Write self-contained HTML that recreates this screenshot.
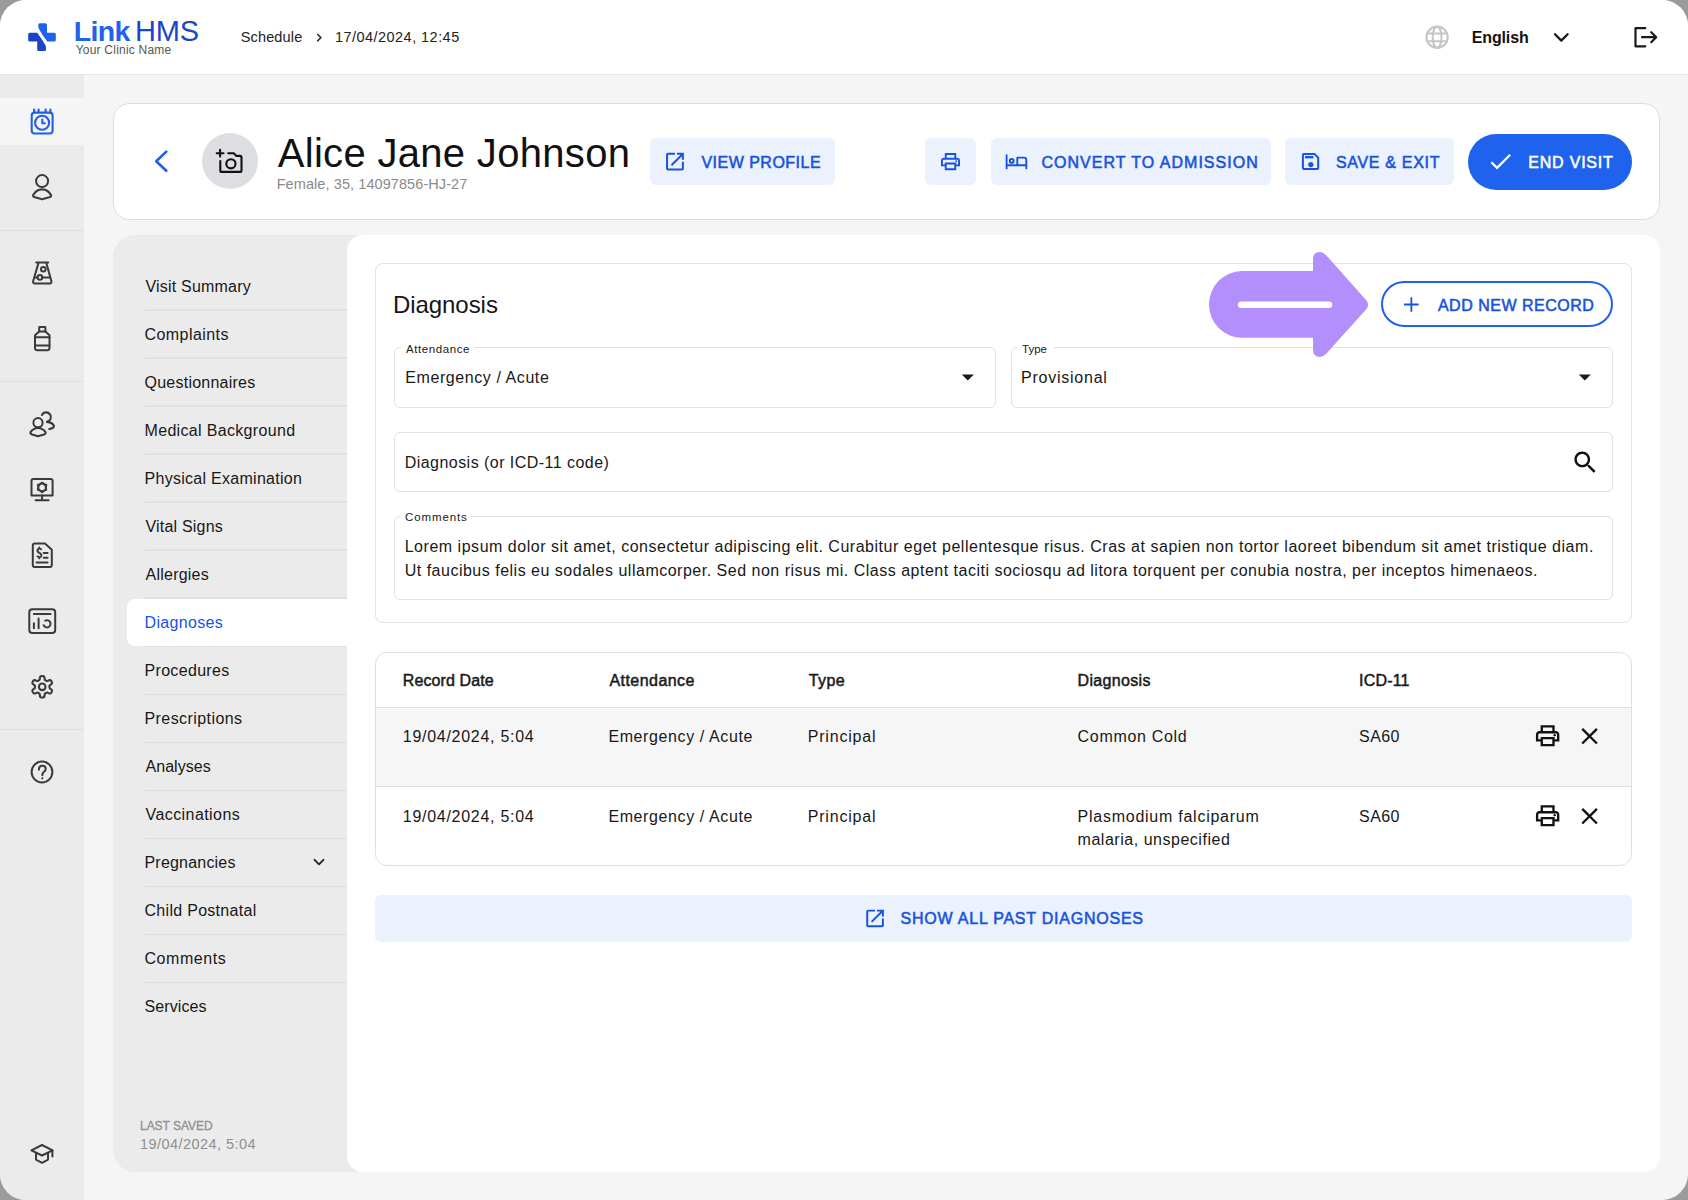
<!DOCTYPE html>
<html><head><meta charset="utf-8"><style>
html,body{margin:0;padding:0;width:1688px;height:1200px;overflow:hidden;background:#9b9b9b}
#f{position:absolute;left:0;top:0;width:1688px;height:1200px;border-radius:26px;overflow:hidden;background:#f5f5f5}
.t{position:absolute;white-space:nowrap;font-family:"Liberation Sans",sans-serif}
svg{position:absolute}
</style></head><body><div id="f">
<div style="position:absolute;left:0px;top:0px;width:1688px;height:74px;background:#fff"></div>
<div style="position:absolute;left:0px;top:74px;width:1688px;height:1px;background:#e6e6e6"></div>
<div style="position:absolute;left:0px;top:75px;width:84px;height:1125px;background:#ebebeb"></div>
<div style="position:absolute;left:0px;top:98px;width:84px;height:47px;background:#f5f5f5"></div>
<div style="position:absolute;left:0px;top:230px;width:84px;height:1px;background:#dde0e6"></div>
<div style="position:absolute;left:0px;top:381px;width:84px;height:1px;background:#dde0e6"></div>
<div style="position:absolute;left:0px;top:729px;width:84px;height:1px;background:#dde0e6"></div>
<div style="position:absolute;left:113px;top:103px;width:1547px;height:117px;background:#fff;border:1px solid #d9dee5;border-radius:16px;box-sizing:border-box"></div>
<div style="position:absolute;left:113px;top:235px;width:1547px;height:937px;background:#ebebeb;border-radius:22px"></div>
<div style="position:absolute;left:347px;top:235px;width:1313px;height:937px;background:#fff;border-radius:16px"></div>
<div style="position:absolute;left:650px;top:138px;width:185px;height:47px;background:#ebf1fd;border-radius:6px"></div>
<div style="position:absolute;left:925px;top:138px;width:51px;height:47px;background:#ebf1fd;border-radius:6px"></div>
<div style="position:absolute;left:991px;top:138px;width:280px;height:47px;background:#ebf1fd;border-radius:6px"></div>
<div style="position:absolute;left:1285px;top:138px;width:169px;height:47px;background:#ebf1fd;border-radius:6px"></div>
<div style="position:absolute;left:1468px;top:133.5px;width:164px;height:56px;background:#1e62ed;border-radius:28px"></div>
<div style="position:absolute;left:202px;top:133px;width:56px;height:56px;background:#dcdee2;border-radius:50%"></div>
<div style="position:absolute;left:145px;top:309px;width:202px;height:2px;background:#dde1e7"></div>
<div style="position:absolute;left:145px;top:357px;width:202px;height:2px;background:#dde1e7"></div>
<div style="position:absolute;left:145px;top:405px;width:202px;height:2px;background:#dde1e7"></div>
<div style="position:absolute;left:145px;top:453px;width:202px;height:2px;background:#dde1e7"></div>
<div style="position:absolute;left:145px;top:501px;width:202px;height:2px;background:#dde1e7"></div>
<div style="position:absolute;left:145px;top:549px;width:202px;height:2px;background:#dde1e7"></div>
<div style="position:absolute;left:145px;top:597px;width:202px;height:2px;background:#dde1e7"></div>
<div style="position:absolute;left:145px;top:645px;width:202px;height:2px;background:#dde1e7"></div>
<div style="position:absolute;left:145px;top:694px;width:202px;height:1px;background:#dcdde5"></div>
<div style="position:absolute;left:145px;top:742px;width:202px;height:1px;background:#dcdde5"></div>
<div style="position:absolute;left:145px;top:790px;width:202px;height:1px;background:#dcdde5"></div>
<div style="position:absolute;left:145px;top:838px;width:202px;height:1px;background:#dcdde5"></div>
<div style="position:absolute;left:145px;top:886px;width:202px;height:1px;background:#dcdde5"></div>
<div style="position:absolute;left:145px;top:934px;width:202px;height:1px;background:#dcdde5"></div>
<div style="position:absolute;left:145px;top:982px;width:202px;height:1px;background:#dcdde5"></div>
<div style="position:absolute;left:127px;top:599px;width:220px;height:47px;background:#fff;border-radius:8px 0 0 8px"></div>
<div style="position:absolute;left:375px;top:263px;width:1257px;height:360px;border:1px solid #e0e3e8;border-radius:8px;box-sizing:border-box"></div>
<div style="position:absolute;left:1381px;top:281px;width:232px;height:46px;border:2px solid #1e62ed;border-radius:23px;box-sizing:border-box"></div>
<div style="position:absolute;left:394px;top:347px;width:602px;height:61px;border:1px solid #e1e1e1;border-radius:6px;box-sizing:border-box"></div>
<div style="position:absolute;left:400.7px;top:345px;width:73.3px;height:4px;background:#fff"></div>
<div style="position:absolute;left:1011px;top:347px;width:602px;height:61px;border:1px solid #e1e1e1;border-radius:6px;box-sizing:border-box"></div>
<div style="position:absolute;left:1017px;top:345px;width:37px;height:4px;background:#fff"></div>
<div style="position:absolute;left:394px;top:432px;width:1219px;height:60px;border:1px solid #e1e1e1;border-radius:6px;box-sizing:border-box"></div>
<div style="position:absolute;left:394px;top:516px;width:1219px;height:84px;border:1px solid #e1e1e1;border-radius:6px;box-sizing:border-box"></div>
<div style="position:absolute;left:400.7px;top:514px;width:70.2px;height:4px;background:#fff"></div>
<div style="position:absolute;left:375px;top:652px;width:1257px;height:214px;border:1px solid #dde1e6;border-radius:12px;box-sizing:border-box;overflow:hidden"></div>
<div style="position:absolute;left:376px;top:707px;width:1255px;height:80px;background:#f6f6f6"></div>
<div style="position:absolute;left:376px;top:707px;width:1255px;height:1px;background:#e0e0e0"></div>
<div style="position:absolute;left:376px;top:786px;width:1255px;height:1px;background:#e0e0e0"></div>
<div style="position:absolute;left:375px;top:895px;width:1257px;height:47px;background:#ebf1fd;border-radius:6px"></div>
<svg width="1688" height="1200" style="left:0;top:0" viewBox="0 0 1688 1200"><path d="M39.8 23.2 H45.5 Q47 23.2 47 24.7 V32.75 H54.3 Q55.8 32.75 55.8 34.25 V40 Q55.8 41.5 54.3 41.5 H47.3 Q42 35 38.6 28.2 Q38.3 27 38.3 25 V24.7 Q38.3 23.2 39.8 23.2 Z" fill="#1f62ec" /><path d="M29.7 32.75 H37.2 Q41.5 38.5 45.6 45.5 Q46 46.5 46 48 V49.5 Q46 51 44.5 51 H38.7 Q37.2 51 37.2 49.5 V41.5 H29.7 Q28.2 41.5 28.2 40 V34.25 Q28.2 32.75 29.7 32.75 Z" fill="#1a46c4" /><path d="M317.6 34.3 L320.9 37.6 L317.6 40.9" stroke="#333" stroke-width="1.5" fill="none" stroke-linecap="round" stroke-linejoin="round" /><circle cx="1437.1" cy="37.25" r="10.6" stroke="#c6c6c6" stroke-width="2.1" fill="none"/><ellipse cx="1437.1" cy="37.25" rx="4.4" ry="10.6" stroke="#c6c6c6" stroke-width="2" fill="none"/><path d="M1427.5 33.6 H1446.7 M1427.5 41.3 H1446.7" stroke="#c6c6c6" stroke-width="2" fill="none" stroke-linecap="round" stroke-linejoin="round" stroke-linecap="butt"/><path d="M1555 34.2 L1561.3 40.6 L1567.6 34.2" stroke="#1a1a1a" stroke-width="2.3" fill="none" stroke-linecap="round" stroke-linejoin="round" /><path d="M1645.3 28.2 H1635.5 V46.3 H1645.3" stroke="#1a1a1a" stroke-width="2.2" fill="none" stroke-linecap="round" stroke-linejoin="round" stroke-linejoin="miter" stroke-linecap="butt"/><path d="M1642 37.2 H1656 M1651.2 32.2 L1656.2 37.2 L1651.2 42.2" stroke="#1a1a1a" stroke-width="2.2" fill="none" stroke-linecap="round" stroke-linejoin="round" /><path d="M34.7 112.6 H49.6 Q52.6 112.6 52.6 115.6 V130.5 Q52.6 133.5 49.6 133.5 H34.7 Q31.7 133.5 31.7 130.5 V115.6 Q31.7 112.6 34.7 112.6 Z" stroke="#1f5fe9" stroke-width="2.1" fill="none" stroke-linecap="round" stroke-linejoin="round" /><path d="M34.1 109.6 V111.6 M38.6 109.6 V111.6 M45.6 109.6 V111.6 M50.4 109.6 V111.6" stroke="#1f5fe9" stroke-width="2.1" fill="none" stroke-linecap="round" stroke-linejoin="round" /><circle cx="42.1" cy="122.7" r="7" stroke="#1f5fe9" stroke-width="2.1" fill="none"/><path d="M42.3 119.6 V123.3 H44.8" stroke="#1f5fe9" stroke-width="2.1" fill="none" stroke-linecap="round" stroke-linejoin="round" /><circle cx="42.1" cy="181.1" r="6" stroke="#3a3a3a" stroke-width="2" fill="none"/><path d="M33.1 195.2 Q36.5 189.4 42.1 189.4 Q47.7 189.4 51.1 195.2 Q51.4 196.6 49.2 197.3 L42.1 199.2 L35 197.3 Q32.8 196.6 33.1 195.2 Z" stroke="#3a3a3a" stroke-width="2.1" fill="none" stroke-linecap="round" stroke-linejoin="round" /><path d="M36.2 262.4 H48.2 M38.6 262.6 L33.1 281.3 Q32.8 283.4 34.8 283.4 H49.8 Q51.8 283.4 51.4 281.3 L46.2 262.6" stroke="#3a3a3a" stroke-width="2" fill="none" stroke-linecap="round" stroke-linejoin="round" /><circle cx="43.3" cy="269.3" r="2.3" stroke="#3a3a3a" stroke-width="2" fill="none"/><circle cx="39.9" cy="277.4" r="2.3" stroke="#3a3a3a" stroke-width="2" fill="none"/><path d="M42.2 277.4 H49.6 M35.2 277.4 H37.6" stroke="#3a3a3a" stroke-width="2" fill="none" stroke-linecap="round" stroke-linejoin="round" stroke-linecap="butt"/><path d="M39.5 327.1 H45.1 Q45.4 327.1 45.4 327.4 V331.5 H39.2 V327.4 Q39.2 327.1 39.5 327.1 Z" stroke="#3a3a3a" stroke-width="2" fill="none" stroke-linecap="round" stroke-linejoin="round" /><path d="M39.2 331.5 L35 335.2 V347.8 Q35 350.3 37.5 350.3 H47 Q49.5 350.3 49.5 347.8 V335.2 L45.4 331.5" stroke="#3a3a3a" stroke-width="2" fill="none" stroke-linecap="round" stroke-linejoin="round" /><path d="M35 337.3 H49.5 M35 345.5 H49.5" stroke="#3a3a3a" stroke-width="2" fill="none" stroke-linecap="round" stroke-linejoin="round" stroke-linecap="butt"/><circle cx="38" cy="422.7" r="4.6" stroke="#3a3a3a" stroke-width="2" fill="none"/><path d="M30.5 432.2 Q33.5 428 38 428 Q42.5 428 45.6 432.2 Q45.9 433.7 44 434.4 L38 436.2 L32 434.4 Q30.1 433.7 30.5 432.2 Z" stroke="#3a3a3a" stroke-width="2.1" fill="none" stroke-linecap="round" stroke-linejoin="round" /><path d="M41.9 414.9 A4.8 4.8 0 1 1 47 421.9" stroke="#3a3a3a" stroke-width="2.1" fill="none" stroke-linecap="round" stroke-linejoin="round" /><path d="M47 421.9 Q52.8 422.6 54 426 Q54.2 428 49.3 429" stroke="#3a3a3a" stroke-width="2.1" fill="none" stroke-linecap="round" stroke-linejoin="round" /><path d="M33.5 479.1 H50.6 Q52.6 479.1 52.6 481.1 V495.5 H31.5 V481.1 Q31.5 479.1 33.5 479.1 Z" stroke="#3a3a3a" stroke-width="2" fill="none" stroke-linecap="round" stroke-linejoin="round" /><path d="M42.1 495.5 V500.3 M35.6 500.3 H48.6" stroke="#3a3a3a" stroke-width="2" fill="none" stroke-linecap="round" stroke-linejoin="round" /><path d="M42.10 483.00 L45.91 485.20 L45.91 489.60 L42.10 491.80 L38.29 489.60 L38.29 485.20 Z" stroke="#3a3a3a" stroke-width="2.2" fill="none" stroke-linecap="round" stroke-linejoin="round" /><circle cx="42.10" cy="483.00" r="1.35" fill="#3a3a3a"/><circle cx="45.91" cy="485.20" r="1.35" fill="#3a3a3a"/><circle cx="45.91" cy="489.60" r="1.35" fill="#3a3a3a"/><circle cx="42.10" cy="491.80" r="1.35" fill="#3a3a3a"/><circle cx="38.29" cy="489.60" r="1.35" fill="#3a3a3a"/><circle cx="38.29" cy="485.20" r="1.35" fill="#3a3a3a"/><path d="M34.8 543.5 H45 L51.8 549.8 V565 Q51.8 567 49.8 567 H34.8 Q32.8 567 32.8 565 V545.5 Q32.8 543.5 34.8 543.5 Z" stroke="#3a3a3a" stroke-width="2" fill="none" stroke-linecap="round" stroke-linejoin="round" /><path d="M41 549.2 Q38.5 547.8 37.6 549.8 Q37 551.8 39.3 552.8 Q41.8 553.8 41.3 556 Q40.5 558 37.4 556.4 M39.3 547.4 V548.4 M39.3 557.6 V558.4" stroke="#3a3a3a" stroke-width="1.9" fill="none" stroke-linecap="round" stroke-linejoin="round" /><path d="M43.7 553 H47.6 M43.7 557.8 H47.6 M36.6 562.4 H47.6" stroke="#3a3a3a" stroke-width="2" fill="none" stroke-linecap="round" stroke-linejoin="round" /><path d="M32.3 609.3 H52.2 Q55.2 609.3 55.2 612.3 V629.9 Q55.2 632.9 52.2 632.9 H32.3 Q29.3 632.9 29.3 629.9 V612.3 Q29.3 609.3 32.3 609.3 Z" stroke="#3a3a3a" stroke-width="2" fill="none" stroke-linecap="round" stroke-linejoin="round" /><path d="M33.8 614 H50.6 M33.9 623.3 V628.3 M38.6 618.5 V628.3" stroke="#3a3a3a" stroke-width="2" fill="none" stroke-linecap="round" stroke-linejoin="round" /><path d="M43.6 625.2 A3.6 3.6 0 1 0 45.2 620.6" stroke="#3a3a3a" stroke-width="2" fill="none" stroke-linecap="round" stroke-linejoin="round" /><path d="M49.45 686.80 L49.45 686.99 L49.45 687.18 L49.45 687.37 L49.47 687.56 L49.50 687.76 L49.57 687.97 L49.71 688.19 L49.97 688.45 L50.37 688.76 L50.89 689.13 L51.40 689.52 L51.77 689.91 L51.97 690.26 L52.04 690.58 L52.03 690.87 L51.97 691.15 L51.88 691.42 L51.77 691.68 L51.65 691.93 L51.51 692.17 L51.36 692.42 L51.21 692.65 L51.04 692.87 L50.85 693.09 L50.64 693.28 L50.39 693.43 L50.08 693.53 L49.68 693.53 L49.16 693.40 L48.56 693.16 L47.99 692.90 L47.51 692.70 L47.16 692.61 L46.89 692.60 L46.68 692.64 L46.49 692.71 L46.32 692.80 L46.15 692.89 L45.99 692.98 L45.83 693.08 L45.66 693.17 L45.50 693.27 L45.33 693.37 L45.17 693.47 L45.02 693.60 L44.87 693.76 L44.75 694.00 L44.65 694.35 L44.59 694.86 L44.53 695.49 L44.44 696.13 L44.29 696.64 L44.09 696.99 L43.85 697.21 L43.59 697.35 L43.32 697.44 L43.04 697.49 L42.76 697.52 L42.48 697.54 L42.20 697.55 L41.92 697.54 L41.64 697.52 L41.36 697.49 L41.08 697.44 L40.81 697.35 L40.55 697.21 L40.31 696.99 L40.11 696.64 L39.96 696.13 L39.87 695.49 L39.81 694.86 L39.75 694.35 L39.65 694.00 L39.53 693.76 L39.38 693.60 L39.23 693.47 L39.07 693.37 L38.90 693.27 L38.74 693.17 L38.58 693.08 L38.41 692.98 L38.25 692.89 L38.08 692.80 L37.91 692.71 L37.72 692.64 L37.51 692.60 L37.24 692.61 L36.89 692.70 L36.41 692.90 L35.84 693.16 L35.24 693.40 L34.72 693.53 L34.32 693.53 L34.01 693.43 L33.76 693.28 L33.55 693.09 L33.36 692.87 L33.19 692.65 L33.04 692.42 L32.89 692.17 L32.75 691.93 L32.63 691.68 L32.52 691.42 L32.43 691.15 L32.37 690.87 L32.36 690.58 L32.43 690.26 L32.63 689.91 L33.00 689.52 L33.51 689.13 L34.03 688.76 L34.43 688.45 L34.69 688.19 L34.83 687.97 L34.90 687.76 L34.93 687.56 L34.95 687.37 L34.95 687.18 L34.95 686.99 L34.95 686.80 L34.95 686.61 L34.95 686.42 L34.95 686.23 L34.93 686.04 L34.90 685.84 L34.83 685.63 L34.69 685.41 L34.43 685.15 L34.03 684.84 L33.51 684.47 L33.00 684.08 L32.63 683.69 L32.43 683.34 L32.36 683.02 L32.37 682.73 L32.43 682.45 L32.52 682.18 L32.63 681.92 L32.75 681.67 L32.89 681.42 L33.04 681.18 L33.19 680.95 L33.36 680.73 L33.55 680.51 L33.76 680.32 L34.01 680.17 L34.32 680.07 L34.72 680.07 L35.24 680.20 L35.84 680.44 L36.41 680.70 L36.89 680.90 L37.24 680.99 L37.51 681.00 L37.72 680.96 L37.91 680.89 L38.08 680.80 L38.25 680.71 L38.41 680.62 L38.58 680.52 L38.74 680.43 L38.90 680.33 L39.07 680.23 L39.23 680.13 L39.38 680.00 L39.53 679.84 L39.65 679.60 L39.75 679.25 L39.81 678.74 L39.87 678.11 L39.96 677.47 L40.11 676.96 L40.31 676.61 L40.55 676.39 L40.81 676.25 L41.08 676.16 L41.36 676.11 L41.64 676.08 L41.92 676.06 L42.20 676.05 L42.48 676.06 L42.76 676.08 L43.04 676.11 L43.32 676.16 L43.59 676.25 L43.85 676.39 L44.09 676.61 L44.29 676.96 L44.44 677.47 L44.53 678.11 L44.59 678.74 L44.65 679.25 L44.75 679.60 L44.87 679.84 L45.02 680.00 L45.17 680.13 L45.33 680.23 L45.50 680.33 L45.66 680.43 L45.83 680.52 L45.99 680.62 L46.15 680.71 L46.32 680.80 L46.49 680.89 L46.68 680.96 L46.89 681.00 L47.16 680.99 L47.51 680.90 L47.99 680.70 L48.56 680.44 L49.16 680.20 L49.68 680.07 L50.08 680.07 L50.39 680.17 L50.64 680.32 L50.85 680.51 L51.04 680.73 L51.21 680.95 L51.36 681.18 L51.51 681.42 L51.65 681.67 L51.77 681.92 L51.88 682.18 L51.97 682.45 L52.03 682.73 L52.04 683.02 L51.97 683.34 L51.77 683.69 L51.40 684.08 L50.89 684.47 L50.37 684.84 L49.97 685.15 L49.71 685.41 L49.57 685.63 L49.50 685.84 L49.47 686.04 L49.45 686.23 L49.45 686.42 L49.45 686.61 Z" stroke="#3a3a3a" stroke-width="2.1" fill="none" stroke-linecap="round" stroke-linejoin="round" /><circle cx="42.2" cy="686.8" r="3.3" stroke="#3a3a3a" stroke-width="2.1" fill="none"/><circle cx="42" cy="772" r="10.4" stroke="#3a3a3a" stroke-width="2" fill="none"/><path d="M38.9 769.7 Q38.9 765.8 42.3 765.8 Q45.7 765.8 45.7 768.9 Q45.7 770.8 43.6 772.2 Q42.3 773.2 42.3 775.2" stroke="#3a3a3a" stroke-width="2" fill="none" stroke-linecap="round" stroke-linejoin="round" /><circle cx="42.3" cy="778.3" r="1.1" fill="#3a3a3a"/><path d="M42 1145 L52.6 1150.3 L42 1155.5 L31.4 1150.3 Z" stroke="#3a3a3a" stroke-width="2" fill="none" stroke-linecap="round" stroke-linejoin="round" /><path d="M36 1153.2 V1159.6 L42 1162.8 L48 1159.6 V1153.2 M52.4 1150.6 V1156.5" stroke="#3a3a3a" stroke-width="2" fill="none" stroke-linecap="round" stroke-linejoin="round" /><path d="M166.3 151.6 L156.2 161.2 L166.3 170.8" stroke="#1f5fe9" stroke-width="2.6" fill="none" stroke-linecap="round" stroke-linejoin="round" /><path d="M216.7 153.2 H223.5 M220.1 149.8 V156.6" stroke="#111" stroke-width="2.1" fill="none" stroke-linecap="round" stroke-linejoin="round" /><path d="M228.2 153.2 H233.8 L236.2 155.9 H240 Q241.5 155.9 241.5 157.4 V170.4 Q241.5 171.9 240 171.9 H221.8 Q220.3 171.9 220.3 170.4 V161" stroke="#111" stroke-width="2.1" fill="none" stroke-linecap="round" stroke-linejoin="round" /><circle cx="230.9" cy="163.8" r="4.6" stroke="#111" stroke-width="2.1" fill="none"/><g transform="translate(663.1 149.8) scale(0.99)"><path d="M19 19H5V5h7V3H5c-1.11 0-2 .9-2 2v14c0 1.1.89 2 2 2h14c1.1 0 2-.9 2-2v-7h-2v7zM14 3v2h3.59l-9.83 9.83 1.41 1.41L19 6.41V10h2V3h-7z" fill="#1753df"/></g><g transform="translate(863.3 906.7) scale(0.98)"><path d="M19 19H5V5h7V3H5c-1.11 0-2 .9-2 2v14c0 1.1.89 2 2 2h14c1.1 0 2-.9 2-2v-7h-2v7zM14 3v2h3.59l-9.83 9.83 1.41 1.41L19 6.41V10h2V3h-7z" fill="#1753df"/></g><g transform="translate(939.1 150.2) scale(0.95)"><path d="M19 8h-1V3H6v5H5c-1.66 0-3 1.34-3 3v6h4v4h12v-4h4v-6c0-1.66-1.34-3-3-3zM8 5h8v3H8V5zm8 14H8v-4h8v4zm2-4v-2H6v2H4v-4c0-.55.45-1 1-1h14c.55 0 1 .45 1 1v4h-2z" fill="#1753df"/><circle cx="18" cy="11.5" r="1" fill="#1753df"/></g><path d="M1006.6 155.2 V168.4 M1006.6 165.2 H1026.3 M1026.3 168.4 V160 Q1026.3 157.6 1024 157.6 H1017.3 V165" stroke="#1753df" stroke-width="1.9" fill="none" stroke-linecap="round" stroke-linejoin="round" /><circle cx="1011.7" cy="160.9" r="1.9" stroke="#1753df" stroke-width="1.9" fill="none"/><path d="M1303.9 153.9 H1314.4 L1318.2 157.7 V168.1 Q1318.2 169.1 1317.2 169.1 H1303.9 Q1302.9 169.1 1302.9 168.1 V154.9 Q1302.9 153.9 1303.9 153.9 Z" stroke="#1753df" stroke-width="2" fill="none" stroke-linecap="round" stroke-linejoin="round" /><path d="M1305 156 H1313.5 V158.4 H1305 Z" fill="#1753df" /><circle cx="1310.8" cy="164.6" r="2.6" fill="#1753df"/><g transform="translate(1486.6 147.5) scale(1.16)"><path d="M9 16.17L4.83 12l-1.42 1.41L9 19 21 7l-1.41-1.41z" fill="#fff"/></g><path d="M1404.8 304.5 H1417.9 M1411.35 298 V311" stroke="#1753df" stroke-width="1.8" fill="none" stroke-linecap="round" stroke-linejoin="round" /><path d="M961.8 374.6 H973.8 L967.8 380.6 Z" fill="#1a1a1a" /><path d="M1578.8 374.6 H1590.8 L1584.8 380.6 Z" fill="#1a1a1a" /><g transform="translate(1570.8 448.0) scale(1.206)"><path d="M15.5 14h-.79l-.28-.27C15.41 12.59 16 11.11 16 9.5 16 5.91 13.09 3 9.5 3S3 5.91 3 9.5 5.91 16 9.5 16c1.61 0 3.09-.59 4.23-1.57l.27.28v.79l5 4.99L20.49 19l-4.99-5zm-6 0C7.01 14 5 11.99 5 9.5S7.01 5 9.5 5 14 7.01 14 9.5 11.99 14 9.5 14z" fill="#111"/></g><g transform="translate(1533.6 721.7) scale(1.17)"><path d="M19 8h-1V3H6v5H5c-1.66 0-3 1.34-3 3v6h4v4h12v-4h4v-6c0-1.66-1.34-3-3-3zM8 5h8v3H8V5zm8 14H8v-4h8v4zm2-4v-2H6v2H4v-4c0-.55.45-1 1-1h14c.55 0 1 .45 1 1v4h-2z" fill="#111"/><circle cx="18" cy="11.5" r="1" fill="#111"/></g><g transform="translate(1575.6 722.2) scale(1.165)"><path d="M19 6.41L17.59 5 12 10.59 6.41 5 5 6.41 10.59 12 5 17.59 6.41 19 12 13.41 17.59 19 19 17.59 13.41 12z" fill="#111"/></g><g transform="translate(1533.6 801.7) scale(1.17)"><path d="M19 8h-1V3H6v5H5c-1.66 0-3 1.34-3 3v6h4v4h12v-4h4v-6c0-1.66-1.34-3-3-3zM8 5h8v3H8V5zm8 14H8v-4h8v4zm2-4v-2H6v2H4v-4c0-.55.45-1 1-1h14c.55 0 1 .45 1 1v4h-2z" fill="#111"/><circle cx="18" cy="11.5" r="1" fill="#111"/></g><g transform="translate(1575.6 802.2) scale(1.165)"><path d="M19 6.41L17.59 5 12 10.59 6.41 5 5 6.41 10.59 12 5 17.59 6.41 19 12 13.41 17.59 19 19 17.59 13.41 12z" fill="#111"/></g><path d="M314.6 859.8 L319 864.3 L323.4 859.8" stroke="#222" stroke-width="1.9" fill="none" stroke-linecap="round" stroke-linejoin="round" /><path d="M1242 271.1 H1313 V259 Q1313 252 1320 252 Q1323 252 1326 255 L1366.5 300.5 Q1369.6 304.7 1366.5 308.9 L1326 354 Q1323 357 1320 357 Q1313 357 1313 350 V337.8 H1242 A33 33.35 0 0 1 1242 271.1 Z" fill="#b38ffd" /><path d="M1241.2 301.5 H1329 Q1332.3 301.5 1332.3 304.8 Q1332.3 308.1 1329 308.1 H1241.2 Q1237.9 308.1 1237.9 304.8 Q1237.9 301.5 1241.2 301.5 Z" fill="#fff" /></svg>
<div class="t" style="left:73.7px;top:17.2px;font-size:28.5px;line-height:28.5px;font-weight:700;color:#1f62ec;letter-spacing:-0.633px;">Link</div>
<div class="t" style="left:135.0px;top:16.8px;font-size:29px;line-height:29px;font-weight:400;color:#1a47c8;letter-spacing:-0.150px;">HMS</div>
<div class="t" style="left:75.7px;top:43.9px;font-size:12px;line-height:12px;font-weight:400;color:#555555;letter-spacing:0.220px;">Your Clinic Name</div>
<div class="t" style="left:240.7px;top:30.2px;font-size:14.5px;line-height:14.5px;font-weight:400;color:#222;letter-spacing:0.157px;">Schedule</div>
<div class="t" style="left:335.0px;top:30.2px;font-size:14.5px;line-height:14.5px;font-weight:400;color:#222;letter-spacing:0.456px;">17/04/2024, 12:45</div>
<div class="t" style="left:1471.8px;top:29.8px;font-size:16px;line-height:16px;font-weight:700;color:#111;letter-spacing:-0.150px;">English</div>
<div class="t" style="left:277.7px;top:133.1px;font-size:40px;line-height:40px;font-weight:400;color:#111;letter-spacing:0.318px;">Alice Jane Johnson</div>
<div class="t" style="left:276.7px;top:176.9px;font-size:14.5px;line-height:14.5px;font-weight:400;color:#8a8a8a;letter-spacing:0.080px;">Female, 35, 14097856-HJ-27</div>
<div class="t" style="left:701.4px;top:154.6px;font-size:16px;line-height:16px;font-weight:400;color:#1753df;letter-spacing:0.491px;-webkit-text-stroke:0.55px #1753df">VIEW PROFILE</div>
<div class="t" style="left:1041.5px;top:154.6px;font-size:16px;line-height:16px;font-weight:400;color:#1753df;letter-spacing:1.005px;-webkit-text-stroke:0.55px #1753df">CONVERT TO ADMISSION</div>
<div class="t" style="left:1336.0px;top:154.6px;font-size:16px;line-height:16px;font-weight:400;color:#1753df;letter-spacing:0.680px;-webkit-text-stroke:0.55px #1753df">SAVE &amp; EXIT</div>
<div class="t" style="left:1528.3px;top:154.8px;font-size:16px;line-height:16px;font-weight:400;color:#fff;letter-spacing:0.787px;-webkit-text-stroke:0.55px #fff">END VISIT</div>
<div class="t" style="left:145.5px;top:279.0px;font-size:16px;line-height:16px;font-weight:400;color:#181818;letter-spacing:0.200px;">Visit Summary</div>
<div class="t" style="left:144.5px;top:327.0px;font-size:16px;line-height:16px;font-weight:400;color:#181818;letter-spacing:0.433px;">Complaints</div>
<div class="t" style="left:144.5px;top:375.0px;font-size:16px;line-height:16px;font-weight:400;color:#181818;letter-spacing:0.238px;">Questionnaires</div>
<div class="t" style="left:144.5px;top:423.0px;font-size:16px;line-height:16px;font-weight:400;color:#181818;letter-spacing:0.329px;">Medical Background</div>
<div class="t" style="left:144.5px;top:471.0px;font-size:16px;line-height:16px;font-weight:400;color:#181818;letter-spacing:0.279px;">Physical Examination</div>
<div class="t" style="left:145.5px;top:519.0px;font-size:16px;line-height:16px;font-weight:400;color:#181818;letter-spacing:0.200px;">Vital Signs</div>
<div class="t" style="left:145.5px;top:567.0px;font-size:16px;line-height:16px;font-weight:400;color:#181818;letter-spacing:0.237px;">Allergies</div>
<div class="t" style="left:144.5px;top:615.0px;font-size:16px;line-height:16px;font-weight:400;color:#1455e6;letter-spacing:0.338px;">Diagnoses</div>
<div class="t" style="left:144.5px;top:663.0px;font-size:16px;line-height:16px;font-weight:400;color:#181818;letter-spacing:0.322px;">Procedures</div>
<div class="t" style="left:144.5px;top:711.0px;font-size:16px;line-height:16px;font-weight:400;color:#181818;letter-spacing:0.425px;">Prescriptions</div>
<div class="t" style="left:145.5px;top:759.0px;font-size:16px;line-height:16px;font-weight:400;color:#181818;letter-spacing:0.043px;">Analyses</div>
<div class="t" style="left:145.5px;top:807.0px;font-size:16px;line-height:16px;font-weight:400;color:#181818;letter-spacing:0.427px;">Vaccinations</div>
<div class="t" style="left:144.5px;top:855.0px;font-size:16px;line-height:16px;font-weight:400;color:#181818;letter-spacing:0.200px;">Pregnancies</div>
<div class="t" style="left:144.5px;top:903.0px;font-size:16px;line-height:16px;font-weight:400;color:#181818;letter-spacing:0.293px;">Child Postnatal</div>
<div class="t" style="left:144.5px;top:951.0px;font-size:16px;line-height:16px;font-weight:400;color:#181818;letter-spacing:0.543px;">Comments</div>
<div class="t" style="left:144.5px;top:999.0px;font-size:16px;line-height:16px;font-weight:400;color:#181818;letter-spacing:0.100px;">Services</div>
<div class="t" style="left:140.0px;top:1119.6px;font-size:12px;line-height:12px;font-weight:400;color:#8f8f8f;letter-spacing:-0.033px;-webkit-text-stroke:0.3px #8f8f8f">LAST SAVED</div>
<div class="t" style="left:140.0px;top:1136.9px;font-size:14.5px;line-height:14.5px;font-weight:400;color:#8f8f8f;letter-spacing:0.440px;">19/04/2024, 5:04</div>
<div class="t" style="left:392.9px;top:293.2px;font-size:24px;line-height:24px;font-weight:400;color:#161616;letter-spacing:-0.050px;">Diagnosis</div>
<div class="t" style="left:1437.9px;top:297.7px;font-size:16px;line-height:16px;font-weight:400;color:#1753df;letter-spacing:0.508px;-webkit-text-stroke:0.55px #1753df">ADD NEW RECORD</div>
<div class="t" style="left:406.0px;top:343.6px;font-size:11.5px;line-height:11.5px;font-weight:400;color:#181818;letter-spacing:0.578px;">Attendance</div>
<div class="t" style="left:1022.0px;top:343.6px;font-size:11.5px;line-height:11.5px;font-weight:400;color:#181818;letter-spacing:0.000px;">Type</div>
<div class="t" style="left:405.0px;top:512.4px;font-size:11.5px;line-height:11.5px;font-weight:400;color:#181818;letter-spacing:0.886px;">Comments</div>
<div class="t" style="left:405.3px;top:369.6px;font-size:16px;line-height:16px;font-weight:400;color:#181818;letter-spacing:0.575px;">Emergency / Acute</div>
<div class="t" style="left:1021.0px;top:370.2px;font-size:16px;line-height:16px;font-weight:400;color:#181818;letter-spacing:0.760px;">Provisional</div>
<div class="t" style="left:404.7px;top:454.6px;font-size:16px;line-height:16px;font-weight:400;color:#181818;letter-spacing:0.460px;">Diagnosis (or ICD-11 code)</div>
<div class="t" style="left:404.7px;top:539.0px;font-size:16px;line-height:16px;font-weight:400;color:#181818;letter-spacing:0.521px;">Lorem ipsum dolor sit amet, consectetur adipiscing elit. Curabitur eget pellentesque risus. Cras at sapien non tortor laoreet bibendum sit amet tristique diam.</div>
<div class="t" style="left:404.7px;top:562.5px;font-size:16px;line-height:16px;font-weight:400;color:#181818;letter-spacing:0.502px;">Ut faucibus felis eu sodales ullamcorper. Sed non risus mi. Class aptent taciti sociosqu ad litora torquent per conubia nostra, per inceptos himenaeos.</div>
<div class="t" style="left:402.8px;top:672.6px;font-size:16px;line-height:16px;font-weight:400;color:#181818;letter-spacing:0.100px;-webkit-text-stroke:0.5px #1d1d1d">Record Date</div>
<div class="t" style="left:609.4px;top:672.6px;font-size:16px;line-height:16px;font-weight:400;color:#181818;letter-spacing:0.456px;-webkit-text-stroke:0.5px #1d1d1d">Attendance</div>
<div class="t" style="left:808.8px;top:672.6px;font-size:16px;line-height:16px;font-weight:400;color:#181818;letter-spacing:0.400px;-webkit-text-stroke:0.5px #1d1d1d">Type</div>
<div class="t" style="left:1077.6px;top:672.6px;font-size:16px;line-height:16px;font-weight:400;color:#181818;letter-spacing:0.325px;-webkit-text-stroke:0.5px #1d1d1d">Diagnosis</div>
<div class="t" style="left:1359.1px;top:672.6px;font-size:16px;line-height:16px;font-weight:400;color:#181818;letter-spacing:0.180px;-webkit-text-stroke:0.5px #1d1d1d">ICD-11</div>
<div class="t" style="left:402.8px;top:729.0px;font-size:16px;line-height:16px;font-weight:400;color:#181818;letter-spacing:0.720px;">19/04/2024, 5:04</div>
<div class="t" style="left:608.4px;top:729.0px;font-size:16px;line-height:16px;font-weight:400;color:#181818;letter-spacing:0.606px;">Emergency / Acute</div>
<div class="t" style="left:807.8px;top:729.0px;font-size:16px;line-height:16px;font-weight:400;color:#181818;letter-spacing:0.787px;">Principal</div>
<div class="t" style="left:1359.1px;top:729.0px;font-size:16px;line-height:16px;font-weight:400;color:#181818;letter-spacing:0.367px;">SA60</div>
<div class="t" style="left:402.8px;top:808.8px;font-size:16px;line-height:16px;font-weight:400;color:#181818;letter-spacing:0.720px;">19/04/2024, 5:04</div>
<div class="t" style="left:608.4px;top:808.8px;font-size:16px;line-height:16px;font-weight:400;color:#181818;letter-spacing:0.606px;">Emergency / Acute</div>
<div class="t" style="left:807.8px;top:808.8px;font-size:16px;line-height:16px;font-weight:400;color:#181818;letter-spacing:0.787px;">Principal</div>
<div class="t" style="left:1359.1px;top:808.8px;font-size:16px;line-height:16px;font-weight:400;color:#181818;letter-spacing:0.367px;">SA60</div>
<div class="t" style="left:1077.6px;top:729.0px;font-size:16px;line-height:16px;font-weight:400;color:#181818;letter-spacing:0.680px;">Common Cold</div>
<div class="t" style="left:1077.6px;top:808.8px;font-size:16px;line-height:16px;font-weight:400;color:#181818;letter-spacing:0.745px;">Plasmodium falciparum</div>
<div class="t" style="left:1077.6px;top:832.2px;font-size:16px;line-height:16px;font-weight:400;color:#181818;letter-spacing:0.521px;">malaria, unspecified</div>
<div class="t" style="left:900.6px;top:911.4px;font-size:16px;line-height:16px;font-weight:400;color:#1753df;letter-spacing:0.768px;-webkit-text-stroke:0.55px #1753df">SHOW ALL PAST DIAGNOSES</div>
</div></body></html>
